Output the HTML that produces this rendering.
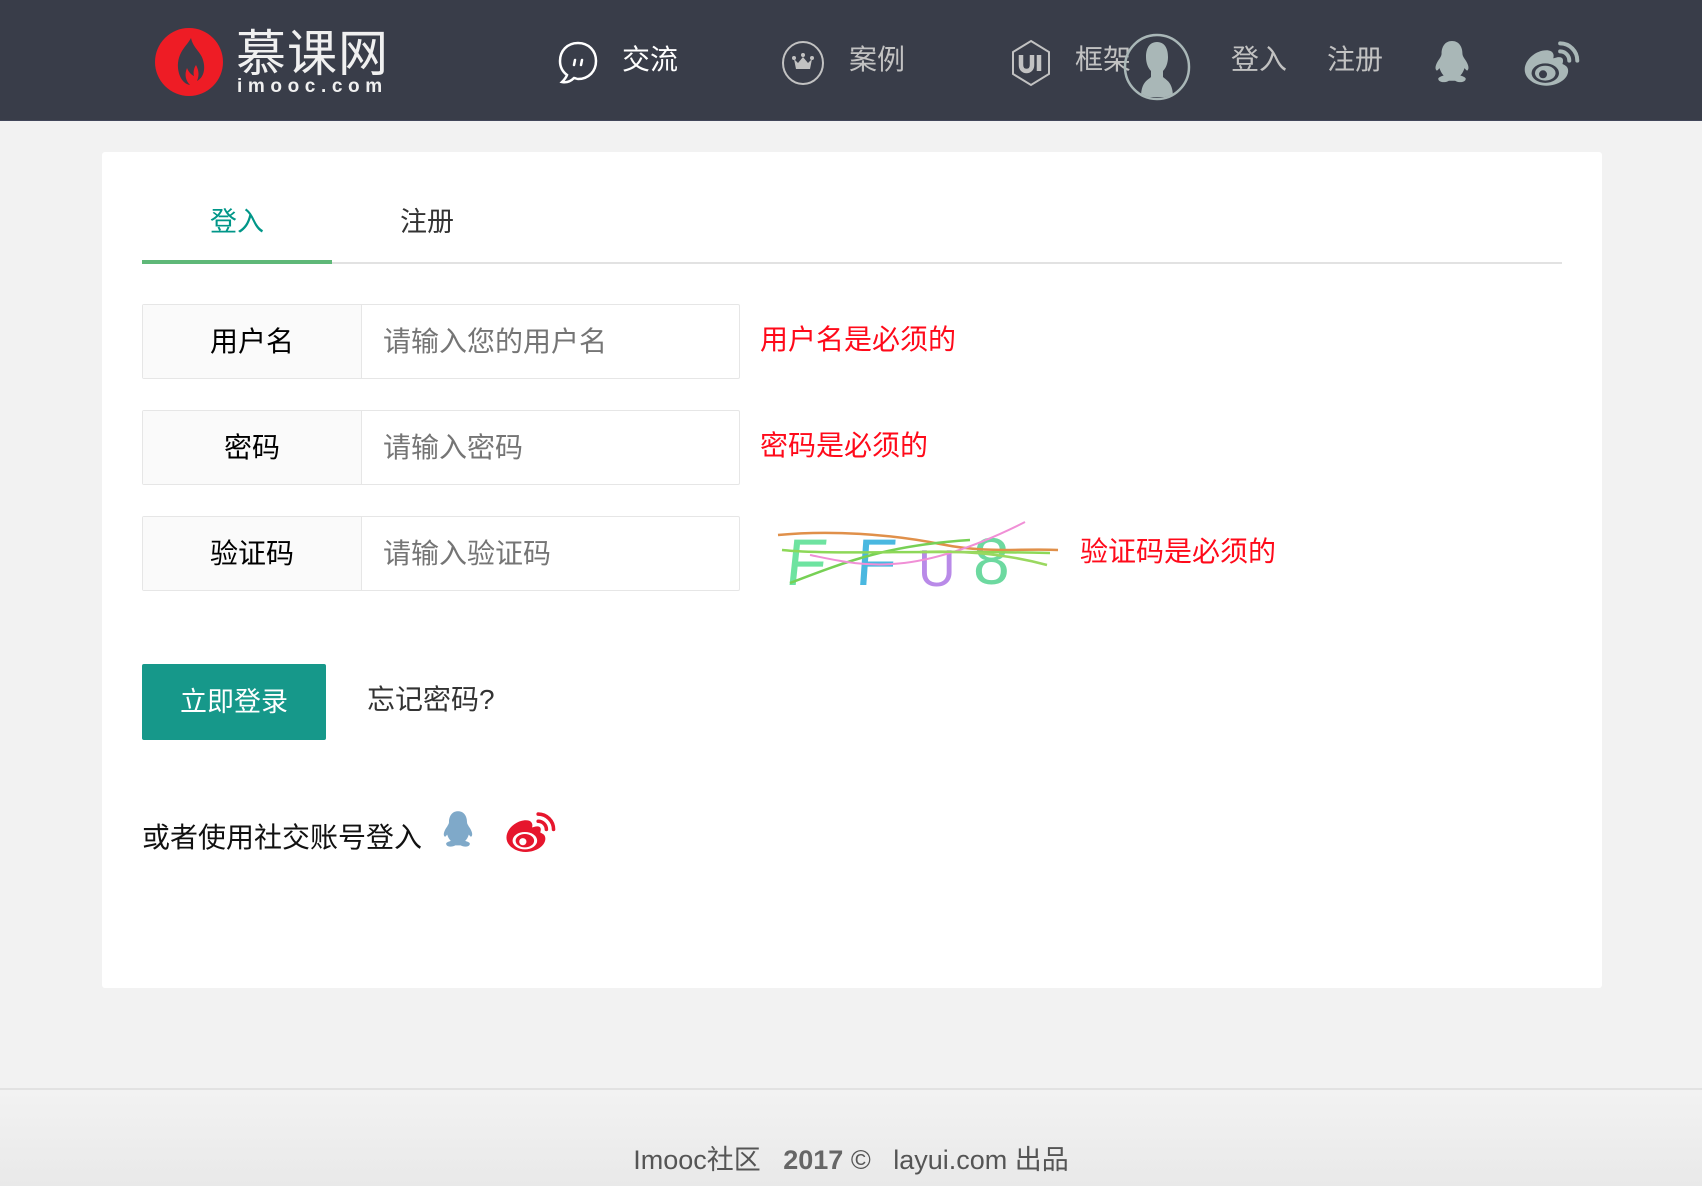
<!DOCTYPE html>
<html><head><meta charset="utf-8"><style>
*{margin:0;padding:0;box-sizing:border-box}
body{width:1702px;height:1186px;background:#f2f2f2;position:relative;overflow:hidden;font-family:"Liberation Sans","Noto Sans CJK SC",sans-serif;}
.a{position:absolute;white-space:nowrap}
.hdr{position:absolute;left:0;top:0;width:1702px;height:121px;background:#393d49;border-bottom:1px solid #42475a}
.nav{font-size:28px;line-height:30px;top:45px}
.card{position:absolute;left:102px;top:152px;width:1500px;height:836px;background:#fff;border-radius:3px}
.row{position:absolute;left:142px;width:598px;height:75px;border:1px solid #e6e6e6;border-radius:2px;background:#fff}
.row .l{position:absolute;left:0;top:0;width:219px;height:73px;background:#fafafa;border-right:1px solid #e6e6e6;text-align:center;font-size:28px;line-height:73px;color:#000}
.row .p{position:absolute;left:240px;top:0;font-size:28px;line-height:73px;color:#757575}
.err{font-size:28px;color:#ff0a1a;line-height:30px}
</style></head><body>
<div class="hdr"></div>
<!-- logo -->
<svg class="a" style="left:155px;top:28px" width="68" height="68" viewBox="0 0 68 68"><circle cx="34" cy="34" r="34" fill="#ee1c25"/><path d="M36 10c-4 8-14 14-13 30 1 10 6 16 12 17-4-4-6-10-3-17 2 5 5 7 7 8-1-4 0-8 2-11 2 4 4 9 1 16 6-3 9-11 6-21-2-8-10-12-12-22z" fill="#393d49"/></svg>
<div class="a" style="left:236px;top:28px;font-size:50px;line-height:52px;color:#f0f0f0;letter-spacing:1px">慕课网</div>
<div class="a" style="left:237px;top:77px;font-size:19px;line-height:20px;color:#f0f0f0;letter-spacing:5.6px;font-weight:bold">imooc.com</div>
<!-- nav -->
<svg class="a" style="left:556px;top:40px" width="44" height="46" viewBox="0 0 42 46"><path d="M21 3C10 3 3 11 3 21c0 6 3 11 7 14-1 3-3 5-5 7 5 1 9-1 12-4 1 0 3 1 4 1 11 0 18-8 18-18S32 3 21 3z" fill="none" stroke="#fff" stroke-width="2.5"/><path d="M18 20l-1 5M25 20l-1 5" stroke="#fff" stroke-width="2.5" stroke-linecap="round"/></svg>
<div class="a nav" style="left:622px;color:#fff">交流</div>
<svg class="a" style="left:781px;top:40px" width="44" height="46" viewBox="0 0 44 46"><ellipse cx="22" cy="23" rx="20" ry="21" fill="none" stroke="#c2c2c2" stroke-width="2"/><path d="M13 19l4 4 5-6 5 6 4-4-2 10H15z" fill="#c2c2c2"/><circle cx="13" cy="18" r="2" fill="#c2c2c2"/><circle cx="22" cy="15" r="2" fill="#c2c2c2"/><circle cx="31" cy="18" r="2" fill="#c2c2c2"/></svg>
<div class="a nav" style="left:849px;color:#c2c2c2">案例</div>
<svg class="a" style="left:1010px;top:39px" width="42" height="48" viewBox="0 0 42 48"><path d="M21 2L39 13v22L21 46 3 35V13z" fill="none" stroke="#c2c2c2" stroke-width="2"/><path d="M11 16v10c0 8 11 8 11 0V16M29 16v16" fill="none" stroke="#c2c2c2" stroke-width="4.5"/></svg>
<div class="a nav" style="left:1075px;color:#c2c2c2">框架</div>
<svg class="a" style="left:1122px;top:32px" width="70" height="70" viewBox="0 0 70 70"><defs><clipPath id="c"><circle cx="35" cy="35" r="31"/></clipPath></defs><circle cx="35" cy="35" r="32" fill="none" stroke="#a9b7b7" stroke-width="2.5"/><g clip-path="url(#c)" fill="#a9b7b7"><path d="M35 10c-8 0-11 7-11 15 0 6 2 11 5 14v6c-3 3-10 5-10 20h32c0-15-7-17-10-20v-6c3-3 5-8 5-14 0-8-3-15-11-15z"/></g></svg>
<div class="a nav" style="left:1231px;color:#c2c2c2">登入</div>
<div class="a nav" style="left:1327px;color:#c2c2c2">注册</div>
<svg class="a" style="left:1431px;top:40px" width="42" height="48" viewBox="0 0 40 46"><path d="M20 1c-7 0-10 6-10 12 0 2-1 3-2 5-3 4-5 9-3 11 1 1 2-1 3-2 1 3 2 5 4 7-3 1-6 2-5 4 1 3 7 3 10 1h6c3 2 9 2 10-1 1-2-2-3-5-4 2-2 3-4 4-7 1 1 2 3 3 2 2-2 0-7-3-11-1-2-2-3-2-5 0-6-3-12-10-12z" fill="#a9b7b7"/></svg>
<svg class="a" style="left:1522px;top:40px" width="58" height="48" viewBox="0 0 50 42"><path d="M21 9C12 9 2 17 2 26c0 8 9 14 19 14s19-6 19-13c0-4-3-5-5-6 1-3 1-6-3-6-2 0-4 1-5 1 1-3 0-7-6-7z" fill="#a9b7b7"/><ellipse cx="20" cy="29" rx="12" ry="8.5" fill="#393d49"/><ellipse cx="20" cy="29" rx="9" ry="6.5" fill="#a9b7b7"/><circle cx="18" cy="30" r="3.5" fill="#393d49"/><path d="M33 10a8 8 0 0 1 8 8M33 3a15 15 0 0 1 15 15" fill="none" stroke="#a9b7b7" stroke-width="3.5" stroke-linecap="round"/></svg>

<div class="card"></div>
<div class="a" style="left:142px;top:262px;width:1420px;height:2px;background:#e2e2e2"></div>
<div class="a" style="left:142px;top:260px;width:190px;height:4px;background:#5fb878"></div>
<div class="a" style="left:210px;top:207px;font-size:27px;line-height:30px;color:#009688">登入</div>
<div class="a" style="left:400px;top:207px;font-size:27px;line-height:30px;color:#333">注册</div>

<div class="row" style="top:304px"><div class="l">用户名</div><div class="p">请输入您的用户名</div></div>
<div class="row" style="top:410px"><div class="l">密码</div><div class="p">请输入密码</div></div>
<div class="row" style="top:516px"><div class="l">验证码</div><div class="p">请输入验证码</div></div>
<div class="a err" style="left:760px;top:325px">用户名是必须的</div>
<div class="a err" style="left:760px;top:431px">密码是必须的</div>
<div class="a err" style="left:1080px;top:537px">验证码是必须的</div>
<svg class="a" style="left:770px;top:510px" width="300" height="90" viewBox="0 0 300 90">
<g font-family="Liberation Sans,sans-serif" font-size="66">
<text x="22" y="75" fill="#6ee3a0" transform="skewX(-6)">F</text>
<text x="90" y="75" fill="#4ab8e0" transform="skewX(-4)">F</text>
<text x="148" y="76" fill="#b98ae8" font-size="52">U</text>
<text x="203" y="74" fill="#6dd9a0" font-size="66">8</text></g>
<path d="M8 25C60 20 120 24 170 34S250 38 288 40" stroke="#e0904a" stroke-width="2.5" fill="none"/>
<path d="M20 73C80 50 120 35 200 30" stroke="#77d055" stroke-width="2.5" fill="none"/>
<path d="M12 40C60 45 140 40 280 43" stroke="#8dd858" stroke-width="2.5" fill="none"/>
<path d="M40 45C90 55 140 70 255 12" stroke="#f08fd6" stroke-width="2" fill="none"/>
<path d="M150 42C200 40 240 45 277 55" stroke="#9ad860" stroke-width="2.5" fill="none"/>
</svg>

<div class="a" style="left:142px;top:664px;width:184px;height:76px;background:#16988a;border-radius:2px;color:#fff;font-size:27px;line-height:76px;text-align:center">立即登录</div>
<div class="a" style="left:367px;top:685px;font-size:28px;line-height:30px;color:#333">忘记密码?</div>
<div class="a" style="left:142px;top:823px;font-size:28px;line-height:30px;color:#111">或者使用社交账号登入</div>
<svg class="a" style="left:440px;top:810px" width="36" height="42" viewBox="0 0 40 46"><path d="M20 1c-7 0-10 6-10 12 0 2-1 3-2 5-3 4-5 9-3 11 1 1 2-1 3-2 1 3 2 5 4 7-3 1-6 2-5 4 1 3 7 3 10 1h6c3 2 9 2 10-1 1-2-2-3-5-4 2-2 3-4 4-7 1 1 2 3 3 2 2-2 0-7-3-11-1-2-2-3-2-5 0-6-3-12-10-12z" fill="#7fa9c9"/></svg>
<svg class="a" style="left:504px;top:811px" width="52" height="43" viewBox="0 0 50 42"><path d="M21 9C12 9 2 17 2 26c0 8 9 14 19 14s19-6 19-13c0-4-3-5-5-6 1-3 1-6-3-6-2 0-4 1-5 1 1-3 0-7-6-7z" fill="#e6162d"/><ellipse cx="20" cy="29" rx="12" ry="8.5" fill="#fff"/><ellipse cx="20" cy="29" rx="9" ry="6.5" fill="#e6162d"/><circle cx="18" cy="30" r="3.5" fill="#fff"/><path d="M33 10a8 8 0 0 1 8 8M33 3a15 15 0 0 1 15 15" fill="none" stroke="#e6162d" stroke-width="3.5" stroke-linecap="round"/></svg>

<div class="a" style="left:0;top:1088px;width:1702px;height:98px;background:linear-gradient(#f2f2f2,#e9e9e9);border-top:2px solid #e2e2e2"></div>
<div class="a" style="left:0;top:1145px;width:1702px;text-align:center;font-size:27px;line-height:30px;color:#555">Imooc社区&nbsp;&nbsp;&nbsp;<span style="color:#666;font-weight:bold">2017</span> ©&nbsp;&nbsp;&nbsp;layui.com 出品</div>
</body></html>
